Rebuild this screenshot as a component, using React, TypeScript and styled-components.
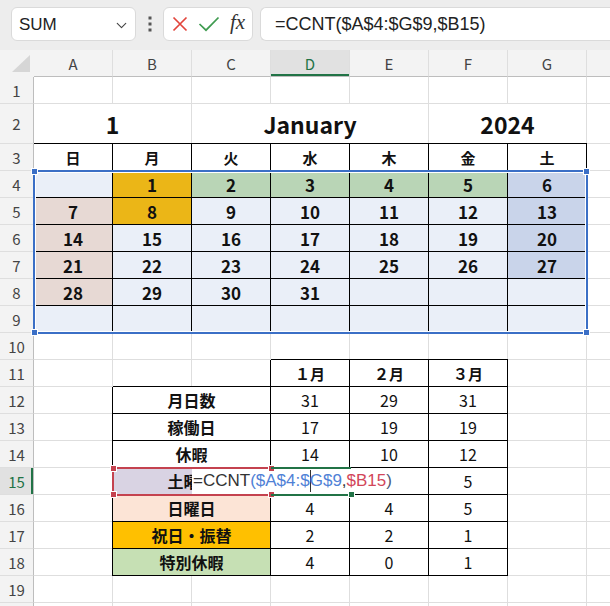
import React from "react";
import styled, { createGlobalStyle } from "styled-components";
import { ChevronDown } from "lucide-react";

// Types
type Kind = "plain" | "title" | "week" | "day" | "month" | "label" | "value";

interface CellSpec {
  r: number;
  c: number;
  span?: number;
  text?: string;
  bg?: string;
  kind?: Kind;
  box?: boolean;
  top?: boolean;
  left?: boolean;
}

const GRID = "#dedede";
const GREEN = "#217346";

const fills = {
  white: "#ffffff",
  light: "#eaeff8",
  sun: "#e7d9d4",
  sat: "#c9d4ea",
  holiday: "#ebb617",
  special: "#b9d5b6",
  lavender: "#d9d3e3",
  peach: "#fce4d6",
  gold: "#ffc000",
  green: "#c6e0b4",
};

const fontOf: Record<Kind, [number, number]> = {
  plain: [400, 16],
  title: [700, 23],
  week: [700, 15],
  day: [700, 17],
  month: [700, 15],
  label: [700, 16],
  value: [400, 16],
};

const COLS = ["A", "B", "C", "D", "E", "F", "G", "H"];
const WEEK = ["日", "月", "火", "水", "木", "金", "土"];

const summary = [
  { label: "月日数", bg: fills.white, values: ["31", "29", "31"] },
  { label: "稼働日", bg: fills.white, values: ["17", "19", "19"] },
  { label: "休暇", bg: fills.white, values: ["14", "10", "12"] },
  { label: "土曜日", bg: fills.lavender, values: ["", "", "5"] },
  { label: "日曜日", bg: fills.peach, values: ["4", "4", "5"] },
  { label: "祝日・振替", bg: fills.gold, values: ["2", "2", "1"] },
  { label: "特別休暇", bg: fills.green, values: ["4", "0", "1"] },
];

// fill the gaps of a sheet row with empty cells
function row(r: number, specs: Omit<CellSpec, "r">[]): CellSpec[] {
  const out: CellSpec[] = [];
  let c = 0;
  for (const s of specs) {
    while (c < s.c) {
      out.push({ r, c });
      c++;
    }
    out.push({ ...s, r });
    c = s.c + (s.span ?? 1);
  }
  while (c < 8) {
    out.push({ r, c });
    c++;
  }
  return out;
}

function dayFill(day: number, c: number) {
  if (day === 1 || day === 8) return fills.holiday;
  if (day >= 2 && day <= 5) return fills.special;
  if (day >= 1 && day <= 31 && c === 0) return fills.sun;
  if (day >= 1 && day <= 31 && c === 6) return fills.sat;
  return fills.light;
}

function buildCells(): CellSpec[] {
  const cells: CellSpec[] = [];
  cells.push(...row(1, []));
  cells.push(
    ...row(2, [
      { c: 0, span: 2, text: "1", kind: "title" },
      { c: 2, span: 3, text: "January", kind: "title" },
      { c: 5, span: 2, text: "2024", kind: "title" },
    ])
  );
  cells.push(
    ...row(
      3,
      WEEK.map((w, c) => ({ c, text: w, kind: "week" as Kind, box: true, top: true }))
    )
  );
  for (let r = 4; r <= 9; r++) {
    cells.push(
      ...row(
        r,
        WEEK.map((_, c) => {
          const day = (r - 4) * 7 + c;
          return {
            c,
            text: day >= 1 && day <= 31 ? String(day) : "",
            bg: dayFill(day, c),
            kind: "day" as Kind,
            box: true,
          };
        })
      )
    );
  }
  cells.push(...row(10, []));
  cells.push(
    ...row(
      11,
      ["１月", "２月", "３月"].map((m, i) => ({
        c: 3 + i,
        text: m,
        kind: "month" as Kind,
        box: true,
        top: true,
        left: i === 0,
      }))
    )
  );
  summary.forEach((s, i) => {
    cells.push(
      ...row(12 + i, [
        { c: 1, span: 2, text: s.label, bg: s.bg, kind: "label", box: true, left: true, top: i === 0 },
        ...s.values.map((v, j) => ({ c: 3 + j, text: v, kind: "value" as Kind, box: true })),
      ])
    );
  });
  cells.push(...row(19, []));
  cells.push(...row(20, []));
  return cells;
}

const cells = buildCells();

function App() {
  return (
    <>
      <GlobalStyle />
      <Page>
        <Toolbar>
          <NameBox>
            SUM
            <ChevronDown size={17} color="#444" strokeWidth={1.6} />
          </NameBox>
          <Dots>
            <svg width="4" height="16" viewBox="0 0 4 16">
              <rect x="0.5" y="0.5" width="3" height="3" fill="#555" />
              <rect x="0.5" y="6.5" width="3" height="3" fill="#555" />
              <rect x="0.5" y="12.5" width="3" height="3" fill="#555" />
            </svg>
          </Dots>
          <ActionBox>
            <svg width="16" height="16" viewBox="0 0 16 16">
              <path d="M1.5 1.5L14.5 14.5M14.5 1.5L1.5 14.5" stroke="#e2453c" strokeWidth="1.7" fill="none" />
            </svg>
            <svg width="22" height="16" viewBox="0 0 22 16">
              <path d="M1.5 8L8 14.2L20.5 1.5" stroke="#3f9b50" strokeWidth="1.7" fill="none" />
            </svg>
            <Fx>fx</Fx>
          </ActionBox>
          <FormulaBox>=CCNT($A$4:$G$9,$B15)</FormulaBox>
        </Toolbar>

        <Sheet>
          <Corner>
            <svg width="34" height="27" viewBox="0 0 34 27">
              <polygon points="12,22 30,22 30,5" fill="#d6d6d6" />
            </svg>
          </Corner>
          {COLS.map((name, c) => (
            <ColHead key={name} $c={c} $active={name === "D"}>
              {name}
            </ColHead>
          ))}
          {Array.from({ length: 20 }, (_, i) => i + 1).map((r) => (
            <RowHead key={r} $r={r} $active={r === 15}>
              {r}
            </RowHead>
          ))}
          {cells.map((cell) => (
            <Cell
              key={`${cell.r}-${cell.c}`}
              $r={cell.r}
              $c={cell.c}
              $span={cell.span ?? 1}
              $bg={cell.bg ?? "#fff"}
              $kind={cell.kind ?? "plain"}
              $box={!!cell.box}
              $top={!!cell.top}
              $left={!!cell.left}
            >
              {cell.text}
            </Cell>
          ))}

          <RangeBox $col="2 / 9" $row="5 / 11" $color="#3b6fc6">
            <Handle $color="#3b6fc6" style={{ top: -4, left: -4 }} />
            <Handle $color="#3b6fc6" style={{ top: -4, right: -4 }} />
            <Handle $color="#3b6fc6" style={{ bottom: -4, left: -4 }} />
            <Handle $color="#3b6fc6" style={{ bottom: -4, right: -4 }} />
          </RangeBox>

          <EditBox>
            <Ink $color="#333">=CCNT</Ink>
            <Ink $color="#4f81d6">($A$4:$</Ink>
            <Caret />
            <Ink $color="#4f81d6">G$9</Ink>
            <Ink $color="#333">,</Ink>
            <Ink $color="#d2465a">$B15</Ink>
            <Ink $color="#4a5a78">)</Ink>
          </EditBox>

          <RefBox>
            <Handle $color="#c4424f" style={{ top: -4, left: -4 }} />
            <Handle $color="#c4424f" style={{ top: -4, right: -4 }} />
            <Handle $color="#c4424f" style={{ bottom: -4, left: -4 }} />
            <Handle $color="#c4424f" style={{ bottom: -4, right: -4 }} />
          </RefBox>

          <ActiveBox>
            <Handle $color={GREEN} style={{ bottom: -4, right: -4 }} />
          </ActiveBox>
        </Sheet>
      </Page>
    </>
  );
}

export default App;

const GlobalStyle = createGlobalStyle`
  html, body {
    margin: 0;
    padding: 0;
    background: #fff;
    overflow: hidden;
  }
  body {
    font-family: "Noto Sans CJK JP", "Noto Sans", sans-serif;
  }
`;

const Page = styled.div`
  width: 610px;
  height: 606px;
  overflow: hidden;
`;

const Toolbar = styled.div`
  height: 50px;
  box-sizing: border-box;
  display: flex;
  align-items: flex-start;
  padding: 7px 0 0 11px;
  background: #ededed;
`;

const NameBox = styled.div`
  width: 125px;
  height: 34px;
  box-sizing: border-box;
  display: flex;
  align-items: center;
  justify-content: space-between;
  padding: 2px 5px 0 7px;
  background: #fff;
  border: 1px solid #dadada;
  border-radius: 6px;
  font: 17px "Liberation Sans", Arial, sans-serif;
  color: #222;
`;

const Dots = styled.div`
  width: 27px;
  height: 34px;
  display: flex;
  align-items: center;
  justify-content: center;
`;

const ActionBox = styled.div`
  width: 90px;
  height: 34px;
  box-sizing: border-box;
  display: flex;
  align-items: center;
  gap: 10px;
  padding-left: 8px;
  background: #fff;
  border: 1px solid #dadada;
  border-radius: 6px;
`;

const Fx = styled.span`
  font: italic 21px "Liberation Serif", "Times New Roman", serif;
  color: #333;
  margin-top: -3px;
`;

const FormulaBox = styled.div`
  flex: 1;
  height: 34px;
  box-sizing: border-box;
  margin-left: 7px;
  display: flex;
  align-items: center;
  padding: 1px 0 0 14px;
  background: #fff;
  border: 1px solid #dadada;
  border-right: none;
  border-radius: 6px 0 0 6px;
  font: 18px "Liberation Sans", Arial, sans-serif;
  color: #222;
  white-space: nowrap;
`;

const Sheet = styled.div`
  display: grid;
  grid-template-columns: 34px repeat(8, 79px);
  grid-template-rows: 27px 27px 40px repeat(18, 27px);
  width: max-content;
  background: #fff;
`;

const Corner = styled.div`
  grid-row: 1;
  grid-column: 1;
  background: #f3f3f3;
  display: flex;
`;

const ColHead = styled.div<{ $c: number; $active: boolean }>`
  grid-row: 1;
  grid-column: ${(p) => p.$c + 2};
  box-sizing: border-box;
  display: flex;
  align-items: center;
  justify-content: center;
  background: ${(p) => (p.$active ? "#e1e1e1" : "#f3f3f3")};
  border-right: 1px solid ${GRID};
  border-bottom: 1px solid #bdbdbd;
  box-shadow: ${(p) => (p.$active ? `inset 0 -2px 0 ${GREEN}` : "none")};
  color: ${(p) => (p.$active ? GREEN : "#444")};
  font-size: 15px;
  padding-top: 1px;
`;

const RowHead = styled.div<{ $r: number; $active: boolean }>`
  grid-row: ${(p) => p.$r + 1};
  grid-column: 1;
  box-sizing: border-box;
  display: flex;
  align-items: center;
  justify-content: center;
  background: ${(p) => (p.$active ? "#e1e1e1" : "#f3f3f3")};
  border-right: 1px solid #bdbdbd;
  border-bottom: 1px solid ${GRID};
  box-shadow: ${(p) => (p.$active ? `inset -2px 0 0 ${GREEN}` : "none")};
  color: ${(p) => (p.$active ? GREEN : "#444")};
  font-size: 15px;
`;

interface CellProps {
  $r: number;
  $c: number;
  $span: number;
  $bg: string;
  $kind: Kind;
  $box: boolean;
  $top: boolean;
  $left: boolean;
}

const Cell = styled.div<CellProps>`
  grid-row: ${(p) => p.$r + 1};
  grid-column: ${(p) => p.$c + 2} / span ${(p) => p.$span};
  box-sizing: border-box;
  display: flex;
  align-items: center;
  justify-content: center;
  background: ${(p) => p.$bg};
  border-right: 1px solid ${(p) => (p.$box ? "#000" : GRID)};
  border-bottom: 1px solid ${(p) => (p.$box ? "#000" : GRID)};
  box-shadow: ${(p) =>
    [p.$top ? "0 -1px 0 #000" : "", p.$left ? "-1px 0 0 #000" : ""]
      .filter(Boolean)
      .join(", ") || "none"};
  font-weight: ${(p) => fontOf[p.$kind][0]};
  font-size: ${(p) => fontOf[p.$kind][1]}px;
  color: #111;
  white-space: nowrap;
  overflow: hidden;
`;

const RangeBox = styled.div<{ $col: string; $row: string; $color: string }>`
  grid-column: ${(p) => p.$col};
  grid-row: ${(p) => p.$row};
  position: relative;
  z-index: 2;
  margin: -1px;
  border: 2px solid ${(p) => p.$color};
  box-shadow: inset 0 0 0 1px #fff;
  pointer-events: none;
`;

const Handle = styled.span<{ $color: string }>`
  position: absolute;
  width: 5px;
  height: 5px;
  background: ${(p) => p.$color};
  border: 1px solid #fff;
`;

const EditBox = styled.div`
  grid-column: 4 / 7;
  grid-row: 16;
  justify-self: start;
  position: relative;
  z-index: 1;
  margin-bottom: 1px;
  padding: 0 5px 0 1px;
  display: flex;
  align-items: center;
  background: #fff;
  font: 17px "Liberation Sans", Arial, sans-serif;
  white-space: nowrap;
`;

const Ink = styled.span<{ $color: string }>`
  color: ${(p) => p.$color};
`;

const Caret = styled.span`
  display: inline-block;
  width: 1px;
  height: 22px;
  margin-right: -1px;
  background: #333;
`;

const RefBox = styled.div`
  grid-column: 3 / 5;
  grid-row: 16;
  position: relative;
  z-index: 2;
  margin: -1px 0 -1px -1px;
  border: 2px solid #c4424f;
  border-right: none;
  pointer-events: none;
`;

const ActiveBox = styled.div`
  grid-column: 5;
  grid-row: 16;
  position: relative;
  z-index: 2;
  margin: -1px -1px -1px 0;
  border-top: 2px solid ${GREEN};
  border-bottom: 2px solid ${GREEN};
  pointer-events: none;
`;
